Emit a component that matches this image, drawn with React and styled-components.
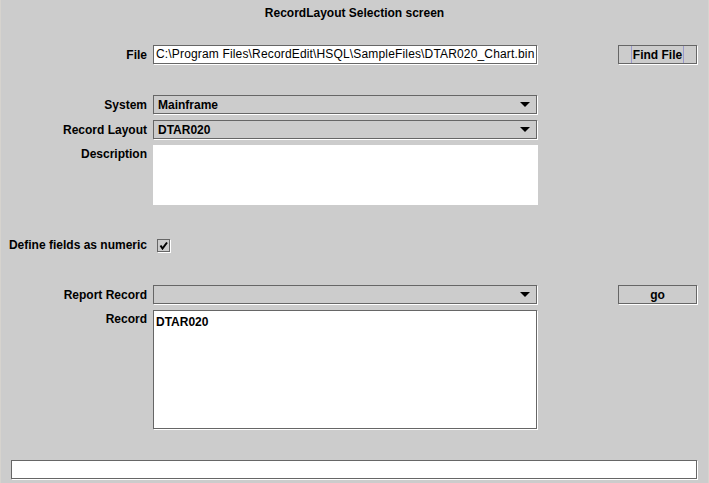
import React from 'react';
import styled, { createGlobalStyle } from 'styled-components';

const GlobalStyle = createGlobalStyle`
  html, body {
    margin: 0;
    padding: 0;
    background: #cccccc;
  }
  body {
    font-family: "Liberation Sans", Arial, sans-serif;
    font-size: 12px;
    color: #000;
  }
`;

const Window = styled.div`
  width: 709px;
  height: 483px;
  box-sizing: border-box;
  background: #cccccc;
  border-left: 1px solid #d6d3ce;
  border-right: 1px solid #d6d3ce;
  display: flex;
  flex-direction: column;
  overflow: hidden;
`;

const Title = styled.div`
  padding-top: 5px;
  height: 16px;
  line-height: 16px;
  text-align: center;
  font-weight: bold;
`;

const Row = styled.div`
  display: grid;
  grid-template-columns: 146px 385px 1fr;
  column-gap: 6px;
  margin-top: ${(p) => p.$top}px;
  padding-right: 11px;
  align-items: ${(p) => (p.$center ? 'center' : 'start')};
`;

const Label = styled.div`
  text-align: right;
  font-weight: bold;
  line-height: 18px;
  white-space: nowrap;
`;

const sunken = `
  box-sizing: border-box;
  border: 1px solid #666666;
  box-shadow: 1px 1px 0 #ffffff;
`;

const TextField = styled.div`
  ${sunken}
  height: 19px;
  width: 384px;
  background: #ffffff;
  padding-left: 2px;
  line-height: 17px;
  letter-spacing: 0.16px;
  white-space: nowrap;
  overflow: hidden;
`;

const Combo = styled.div`
  ${sunken}
  height: 19px;
  width: 384px;
  background: #cccccc;
  display: flex;
  align-items: center;
  justify-content: space-between;
  padding: 0 6px 0 4px;
  font-weight: bold;
`;

const Arrow = styled.span`
  width: 0;
  height: 0;
  border-left: 5px solid transparent;
  border-right: 5px solid transparent;
  border-top: 5px solid #000;
`;

const Area = styled.div`
  box-sizing: border-box;
  width: ${(p) => (p.$plain ? 385 : 384)}px;
  height: ${(p) => p.$h}px;
  background: #ffffff;
  padding: 3px 2px;
  font-weight: bold;
  line-height: 16px;
  ${(p) => (p.$plain ? '' : sunken)}
`;

const Button = styled.button`
  ${sunken}
  justify-self: end;
  width: 79px;
  height: 19px;
  margin: 0;
  padding: 0;
  background: #cccccc;
  font-family: "Liberation Sans", Arial, sans-serif;
  font-size: 12px;
  font-weight: bold;
  color: #000;
  display: flex;
  align-items: stretch;
  justify-content: center;
`;

const ButtonText = styled.span`
  display: flex;
  align-items: center;
  padding: 0 1px;
  border-left: 1px solid ${(p) => (p.$focus ? '#9999cc' : 'transparent')};
  border-right: 1px solid ${(p) => (p.$focus ? '#9999cc' : 'transparent')};
`;

const CheckBox = styled.div`
  ${sunken}
  width: 13px;
  height: 13px;
  margin-left: 4px;
  background: #cccccc;
  display: flex;
  align-items: center;
  justify-content: center;
`;

const StatusBar = styled.div`
  ${sunken}
  margin: 31px 11px 0 10px;
  height: 19px;
  background: #ffffff;
`;

function App() {
  return (
    <Window>
      <GlobalStyle />
      <Title>RecordLayout Selection screen</Title>

      <Row $top={24} $center>
        <Label>File</Label>
        <TextField>C:\Program Files\RecordEdit\HSQL\SampleFiles\DTAR020_Chart.bin</TextField>
        <Button>
          <ButtonText $focus>Find File</ButtonText>
        </Button>
      </Row>

      <Row $top={31} $center>
        <Label>System</Label>
        <Combo>
          Mainframe
          <Arrow />
        </Combo>
      </Row>

      <Row $top={6} $center>
        <Label>Record Layout</Label>
        <Combo>
          DTAR020
          <Arrow />
        </Combo>
      </Row>

      <Row $top={6}>
        <Label>Description</Label>
        <Area $plain $h={60} />
      </Row>

      <Row $top={31} $center>
        <Label>Define fields as numeric</Label>
        <CheckBox>
          <svg width="9" height="9" viewBox="0 0 9 9">
            <path d="M1.5 4.5 L3.5 7.5 L8 1.5" fill="none" stroke="#000" strokeWidth="2" />
          </svg>
        </CheckBox>
      </Row>

      <Row $top={31} $center>
        <Label>Report Record</Label>
        <Combo>
          <span />
          <Arrow />
        </Combo>
        <Button>
          <ButtonText>go</ButtonText>
        </Button>
      </Row>

      <Row $top={6}>
        <Label>Record</Label>
        <Area $h={119}>DTAR020</Area>
      </Row>

      <StatusBar />
    </Window>
  );
}

export default App;
